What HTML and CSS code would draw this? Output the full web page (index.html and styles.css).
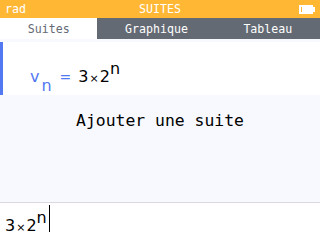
FILE: index.html
```html
<!DOCTYPE html>
<html lang="fr">
<head>
    <meta charset="UTF-8">
    <meta name="viewport" content="width=device-width, initial-scale=1.0">
    <title>Suites</title>
    <link rel="stylesheet" href="styles.css">
</head>
<body>
    <div class="screen">
        <header class="title-bar">
            <span class="angle">rad</span>
            <span class="title">SUITES</span>
            <svg class="battery" width="16" height="9" viewBox="0 0 16 9">
                <rect x="0" y="0" width="14" height="9" fill="#fff"/>
                <rect x="2" y="2" width="1" height="5" fill="#ffb734"/>
                <rect x="14" y="2" width="2" height="5" fill="#fff"/>
            </svg>
        </header>
        <nav class="tabs">
            <div class="tab active">Suites</div>
            <div class="tab">Graphique</div>
            <div class="tab">Tableau</div>
        </nav>
        <main class="list">
            <div class="sequence">
                <p class="formula"><span class="name">v<sub>n</sub></span><span class="equals">=</span>3<span class="times">×</span>2<sup>n</sup></p>
            </div>
            <div class="add-row">Ajouter une suite</div>
        </main>
        <div class="input-bar">
            <p class="formula">3<span class="times">×</span>2<sup>n</sup><span class="cursor"></span></p>
        </div>
    </div>
</body>
</html>
```

FILE: styles.css
```css
* {
    margin: 0;
    padding: 0;
    box-sizing: border-box;
}

body {
    width: 320px;
    height: 240px;
    overflow: hidden;
    background: #f7f9fe;
    font-family: "DejaVu Sans", sans-serif;
}

.screen {
    display: flex;
    flex-direction: column;
    height: 240px;
}

.title-bar {
    height: 18px;
    background: #ffb734;
    color: #fff;
    font-family: "DejaVu Sans Mono", monospace;
    font-size: 11.6px;
    display: flex;
    align-items: center;
    justify-content: space-between;
    padding: 0 5px 1px 5px;
    position: relative;
}

.title {
    position: absolute;
    left: 0;
    right: 0;
    text-align: center;
}

.battery {
    margin-top: 1px;
}

.tabs {
    height: 21px;
    display: flex;
    background: #646a74;
    font-family: "DejaVu Sans Mono", monospace;
    font-size: 11.6px;
}

.tab {
    flex: 1 1 auto;
    display: flex;
    align-items: center;
    justify-content: center;
    color: #fff;
}

.tab.active {
    background: #fff;
    color: #646a74;
}

.list {
    flex: 1;
    display: flex;
    flex-direction: column;
    padding-top: 3px;
}

.formula {
    font-size: 16px;
    line-height: 16px;
    color: #000;
    white-space: nowrap;
}

.formula sub,
.formula sup {
    font-size: 16px;
    line-height: 0;
}

.formula sub {
    vertical-align: -9px;
    margin-left: 2px;
}

.formula sup {
    vertical-align: 8px;
}

.sequence {
    height: 53px;
    background: #fff;
    border-left: 3px solid #5278f2;
    padding: 27px 0 0 27px;
}

.name {
    color: #5278f2;
}

.equals {
    color: #5278f2;
    font-size: 14px;
    margin: 0 7px 0 8px;
}

.times {
    font-size: 11px;
    margin: 0 1px;
}

.add-row {
    height: 51px;
    display: flex;
    align-items: center;
    justify-content: center;
    font-family: "DejaVu Sans Mono", monospace;
    font-size: 16.4px;
    color: #000;
}

.input-bar {
    height: 38px;
    background: #fff;
    border-top: 1px solid #dcd8e0;
    padding: 2px 0 0 5px;
}

.cursor {
    display: inline-block;
    width: 1px;
    height: 27px;
    background: #000;
    margin-left: 2px;
    vertical-align: -1px;
}
```
